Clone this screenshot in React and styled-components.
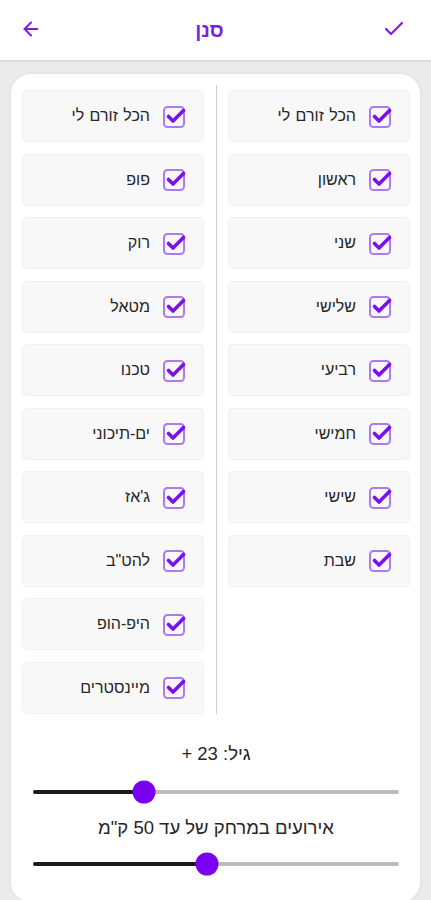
import styled, { createGlobalStyle } from "styled-components";
import { ArrowLeft, Check } from "lucide-react";

const GlobalStyle = createGlobalStyle`
  html, body {
    margin: 0;
    padding: 0;
    background: #ebebeb;
  }
  body {
    font-family: "Liberation Sans", "DejaVu Sans", sans-serif;
  }
`;

const days = ["הכל זורם לי", "ראשון", "שני", "שלישי", "רביעי", "חמישי", "שישי", "שבת"];
const genres = [
  "הכל זורם לי",
  "פופ",
  "רוק",
  "מטאל",
  "טכנו",
  "ים-תיכוני",
  "ג'אז",
  'להט"ב',
  "היפ-הופ",
  "מיינסטרים",
];

const Page = styled.div`
  direction: rtl;
  width: 431px;
  min-height: 900px;
  background: #ebebeb;
`;

const Header = styled.header`
  height: 60px;
  background: #fff;
  display: flex;
  align-items: center;
  justify-content: space-between;
  padding: 0 25px 0 19px;
  box-shadow: 0 1px 3px rgba(0, 0, 0, 0.12);
  color: #7b1fe6;
`;

const Title = styled.h1`
  margin: 0 6px 0 0;
  font-size: 20px;
  font-weight: 700;
  color: #7b1fe6;
`;

const IconButton = styled.span`
  display: flex;
  align-items: center;
  justify-content: center;
  width: 24px;
  height: 24px;
  margin-top: ${(p) => p.$top || 0}px;
`;

const Card = styled.main`
  margin: 14px 11px 0 11px;
  background: #fff;
  border-radius: 20px;
  padding: 16px 10px 36px 11px;
  box-shadow: 0 0 4px rgba(0, 0, 0, 0.06);
`;

const Lists = styled.div`
  display: flex;
  align-items: stretch;
`;

const Column = styled.div`
  width: 182px;
  display: flex;
  flex-direction: column;
  gap: 11.5px;
`;

const Divider = styled.div`
  width: 1px;
  margin: -5px 11.5px 0 11.5px;
  background: #cfcfcf;
  align-self: stretch;
`;

const Item = styled.label`
  height: 52px;
  box-sizing: border-box;
  display: flex;
  align-items: center;
  gap: 12px;
  padding: 0 16px;
  background: #f8f8f8;
  border: 1px solid #f1f1f1;
  border-radius: 5px;
  font-size: 16px;
  word-spacing: 1px;
  color: #262626;
`;

const Box = styled.svg`
  width: 25px;
  height: 25px;
  flex: none;
`;

const CheckBox = () => (
  <Box viewBox="0 0 25 25">
    <rect x="2" y="3" width="20" height="20" rx="3.5" fill="none" stroke="#ac7af2" strokeWidth="2" />
    <path
      d="M6.5 12.5 L11 17 L21.5 6.5"
      fill="none"
      stroke="#7a10ea"
      strokeWidth="3.6"
      strokeLinecap="round"
      strokeLinejoin="round"
    />
  </Box>
);

const Filters = styled.section`
  margin-top: 28px;
  display: flex;
  flex-direction: column;
  align-items: center;
`;

const Label = styled.div`
  font-size: 18.5px;
  color: #262626;
  line-height: 24px;
  margin-top: ${(p) => p.$top || 0}px;
`;

const Track = styled.div`
  position: relative;
  width: 366px;
  height: 4px;
  margin-top: ${(p) => p.$top}px;
  background: #bcbcbc;
  border-radius: 2px;
  direction: ltr;
`;

const Fill = styled.div`
  height: 100%;
  background: #1c1c1c;
  border-radius: 2px;
`;

const Thumb = styled.div`
  position: absolute;
  top: 50%;
  width: 23px;
  height: 23px;
  border-radius: 50%;
  background: #7a00f2;
  transform: translate(-50%, -50%);
`;

const Slider = ({ value, top }) => (
  <Track $top={top}>
    <Fill style={{ width: `${value}%` }} />
    <Thumb style={{ left: `${value}%` }} />
  </Track>
);

const App = () => {
  return (
    <Page>
      <GlobalStyle />
      <Header>
        <IconButton $top={-2}>
          <Check size={30} strokeWidth={2.2} />
        </IconButton>
        <Title>סנן</Title>
        <IconButton $top={-2}>
          <ArrowLeft size={22} strokeWidth={2.2} />
        </IconButton>
      </Header>
      <Card>
        <Lists>
          <Column>
            {days.map((d, i) => (
              <Item key={i}>
                <CheckBox />
                {d}
              </Item>
            ))}
          </Column>
          <Divider />
          <Column>
            {genres.map((g, i) => (
              <Item key={i}>
                <CheckBox />
                {g}
              </Item>
            ))}
          </Column>
        </Lists>
        <Filters>
          <Label>גיל: 23 +</Label>
          <Slider value={30.3} top={24} />
          <Label $top={22}>אירועים במרחק של עד 50 ק"מ</Label>
          <Slider value={47.5} top={22} />
        </Filters>
      </Card>
    </Page>
  );
};

export default App;
